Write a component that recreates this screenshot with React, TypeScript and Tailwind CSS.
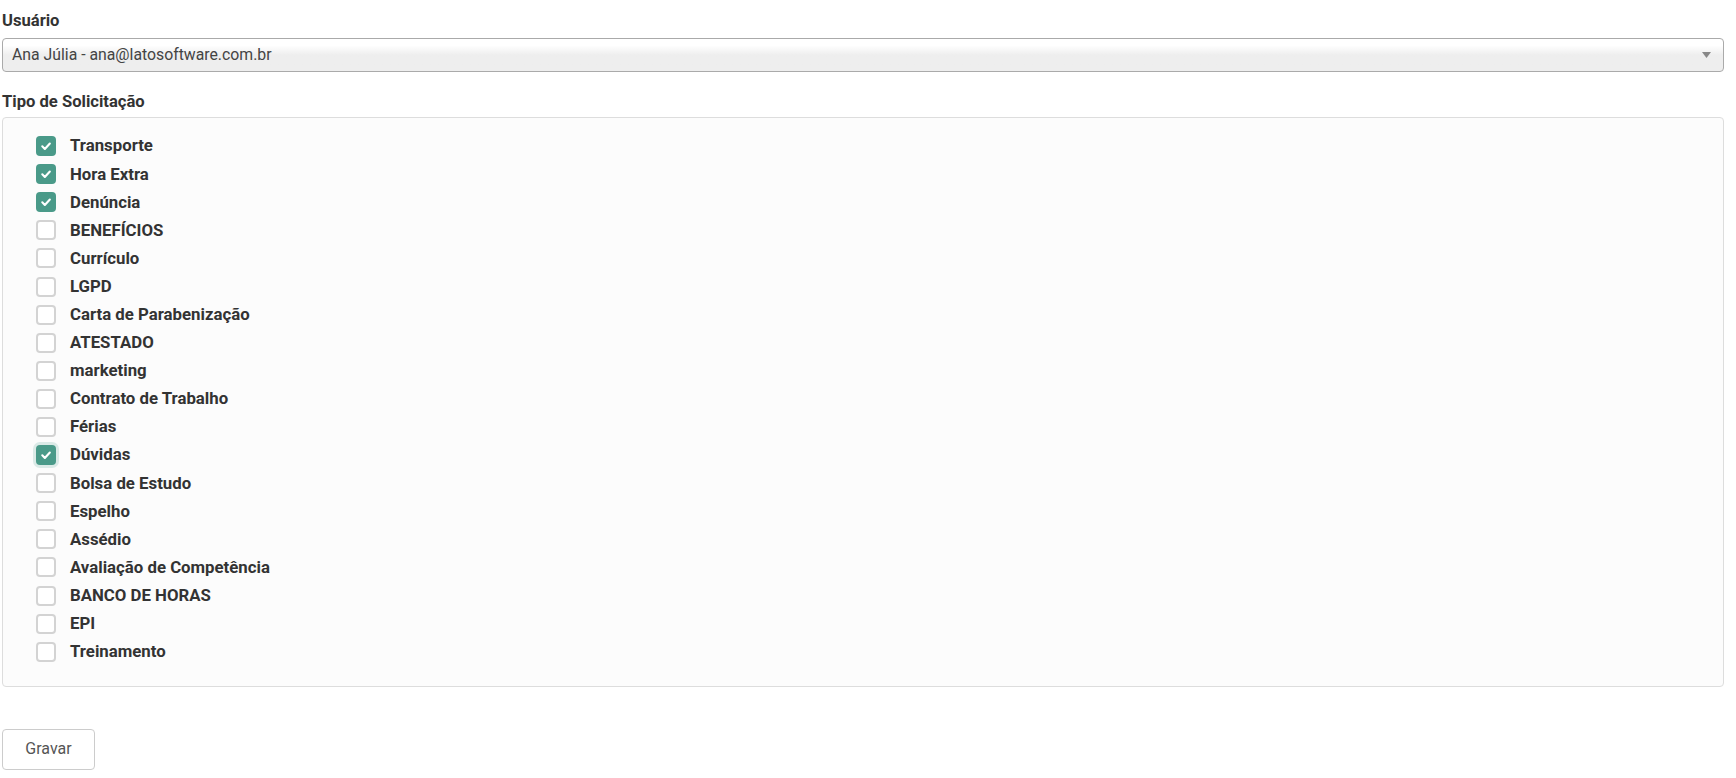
import React, { useState } from "react";

const tipos: { nome: string; marcado: boolean }[] = [
  { nome: "Transporte", marcado: true },
  { nome: "Hora Extra", marcado: true },
  { nome: "Denúncia", marcado: true },
  { nome: "BENEFÍCIOS", marcado: false },
  { nome: "Currículo", marcado: false },
  { nome: "LGPD", marcado: false },
  { nome: "Carta de Parabenização", marcado: false },
  { nome: "ATESTADO", marcado: false },
  { nome: "marketing", marcado: false },
  { nome: "Contrato de Trabalho", marcado: false },
  { nome: "Férias", marcado: false },
  { nome: "Dúvidas", marcado: true },
  { nome: "Bolsa de Estudo", marcado: false },
  { nome: "Espelho", marcado: false },
  { nome: "Assédio", marcado: false },
  { nome: "Avaliação de Competência", marcado: false },
  { nome: "BANCO DE HORAS", marcado: false },
  { nome: "EPI", marcado: false },
  { nome: "Treinamento", marcado: false },
];

function Caixa({ marcado, foco }: { marcado: boolean; foco?: boolean }) {
  if (marcado) {
    return (
      <span
        className={
          "flex h-5 w-5 shrink-0 items-center justify-center rounded-[4px] bg-[#4a9a89] " +
          (foco ? "shadow-[0_0_0_3px_rgba(74,154,137,0.18)]" : "")
        }
      >
        <svg width="14" height="14" viewBox="0 0 12 12" fill="none">
          <path d="M2.8 6.3l2.2 2.2 4.3-4.6" stroke="#fff" strokeWidth="1.8" strokeLinecap="round" strokeLinejoin="round" />
        </svg>
      </span>
    );
  }
  return <span className="h-5 w-5 shrink-0 rounded-[4px] border-2 border-[#d3d3d3] bg-white" />;
}

export default function App() {
  const [itens, setItens] = useState(tipos);

  const alternar = (i: number) =>
    setItens((prev) => prev.map((t, idx) => (idx === i ? { ...t, marcado: !t.marcado } : t)));

  return (
    <div className="min-h-[778px] bg-white pl-[2px] pr-3 pt-[11px] font-['Roboto',_'Liberation_Sans',_sans-serif] text-[#333]">
      <label className="block text-[16.6px] font-bold leading-[20px]">Usuário</label>
      <div className="mt-[7px] flex h-[34px] items-center justify-between rounded-[4px] border border-[#aaa] bg-gradient-to-b from-white from-[20%] to-[#eeeeee] to-[50%] pl-[9px] pr-[12px]">
        <span className="text-[15.8px] text-[#444]">Ana Júlia - ana@latosoftware.com.br</span>
        <svg width="9" height="6" viewBox="0 0 9 6">
          <path d="M0 0h9L4.5 6z" fill="#888" />
        </svg>
      </div>

      <label className="mt-[20px] block text-[16.6px] font-bold leading-[20px]">Tipo de Solicitação</label>
      <div className="mt-[5px] rounded-[4px] border border-[#ddd] bg-[#fcfcfc] pb-[20px] pl-[33px] pt-[14px]">
        {itens.map((t, i) => (
          <div key={t.nome} className="flex h-[28.1px] cursor-pointer items-center gap-[14px]" onClick={() => alternar(i)}>
            <Caixa marcado={t.marcado} foco={t.nome === "Dúvidas"} />
            <span className="text-[16.8px] font-bold text-[#333]">{t.nome}</span>
          </div>
        ))}
      </div>

      <button className="mt-[42px] h-[41px] w-[93px] rounded-[4px] border border-[#ccc] bg-white text-[16px] text-[#555]">
        Gravar
      </button>
    </div>
  );
}
